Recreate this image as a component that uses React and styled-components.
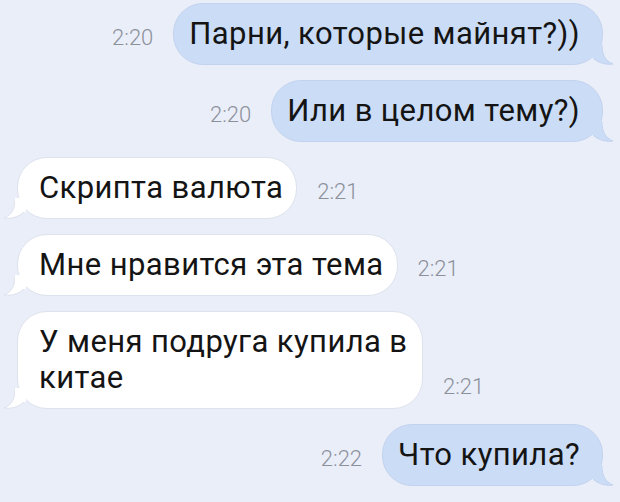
import React from "react";
import styled, { createGlobalStyle } from "styled-components";

const Global = createGlobalStyle`
  html, body { margin: 0; padding: 0; }
  body {
    background: #e9eef9;
    font-family: Roboto, "Noto Sans", sans-serif;
    -webkit-font-smoothing: antialiased;
  }
`;

const Chat = styled.div`
  width: 620px;
  height: 502px;
  box-sizing: border-box;
  padding: 3px 0 0;
  display: flex;
  flex-direction: column;
  gap: 15px;
  overflow: hidden;
  background: #e9eef9;
`;

const Row = styled.div`
  display: flex;
  align-items: flex-end;
  justify-content: ${(p) => (p.$out ? "flex-end" : "flex-start")};
  gap: 20px;
  padding: ${(p) => (p.$out ? "0 17px 0 0" : "0 0 0 17px")};
`;

const Time = styled.span`
  font-size: 22px;
  font-weight: 300;
  color: #8c909a;
  line-height: 24px;
  margin-bottom: ${(p) => p.$mb || "15px"};
`;

const Bubble = styled.div`
  position: relative;
  box-sizing: border-box;
  max-width: ${(p) => p.$max || "none"};
  padding: ${(p) => (p.$out ? "12px 22px 12px 15px" : "12px 13px 12px 21px")};
  border-radius: 30px;
  background: ${(p) => (p.$out ? "#cbdcf6" : "#ffffff")};
  border: 1px solid ${(p) => (p.$out ? "#c3d3ee" : "#dde2ec")};
  color: #141414;
  font-size: 31px;
  line-height: 36px;
  letter-spacing: 0.4px;
`;

const Tail = styled.svg`
  position: absolute;
  bottom: -1px;
  ${(p) => (p.$out ? "right: -11px;" : "left: -14px;")}
  width: 20px;
  height: 20px;
  overflow: visible;
`;

function BubbleTail({ out }) {
  return out ? (
    <Tail $out viewBox="0 0 20 20">
      <path
        d="M0 0 L9 0 C9 9 12 16 20 19 C13 20 6 18 1 14 Z"
        fill="#cbdcf6"
        stroke="#c3d3ee"
        strokeWidth="1"
      />
      <rect x="-2" y="-1" width="11" height="14" fill="#cbdcf6" />
    </Tail>
  ) : (
    <Tail viewBox="0 0 20 20">
      <path
        d="M20 0 L11 0 C11 9 8 16 0 19 C7 20 14 18 19 14 Z"
        fill="#ffffff"
        stroke="#dde2ec"
        strokeWidth="1"
      />
      <rect x="11" y="-1" width="11" height="14" fill="#ffffff" />
    </Tail>
  );
}

const messages = [
  { out: true, time: "2:20", text: "Парни, которые майнят?))" },
  { out: true, time: "2:20", text: "Или в целом тему?)" },
  { out: false, time: "2:21", text: "Скрипта валюта" },
  { out: false, time: "2:21", text: "Мне нравится эта тема" },
  { out: false, time: "2:21", text: "У меня подруга купила в китае", max: "406px", mb: "10px" },
  { out: true, time: "2:22", text: "Что купила?" },
];

export default function App() {
  return (
    <>
      <Global />
      <Chat>
        {messages.map((m, i) => (
          <Row key={i} $out={m.out}>
            {m.out && <Time $mb={m.mb}>{m.time}</Time>}
            <Bubble $out={m.out} $max={m.max}>
              <BubbleTail out={m.out} />
              {m.text}
            </Bubble>
            {!m.out && <Time $mb={m.mb}>{m.time}</Time>}
          </Row>
        ))}
      </Chat>
    </>
  );
}
